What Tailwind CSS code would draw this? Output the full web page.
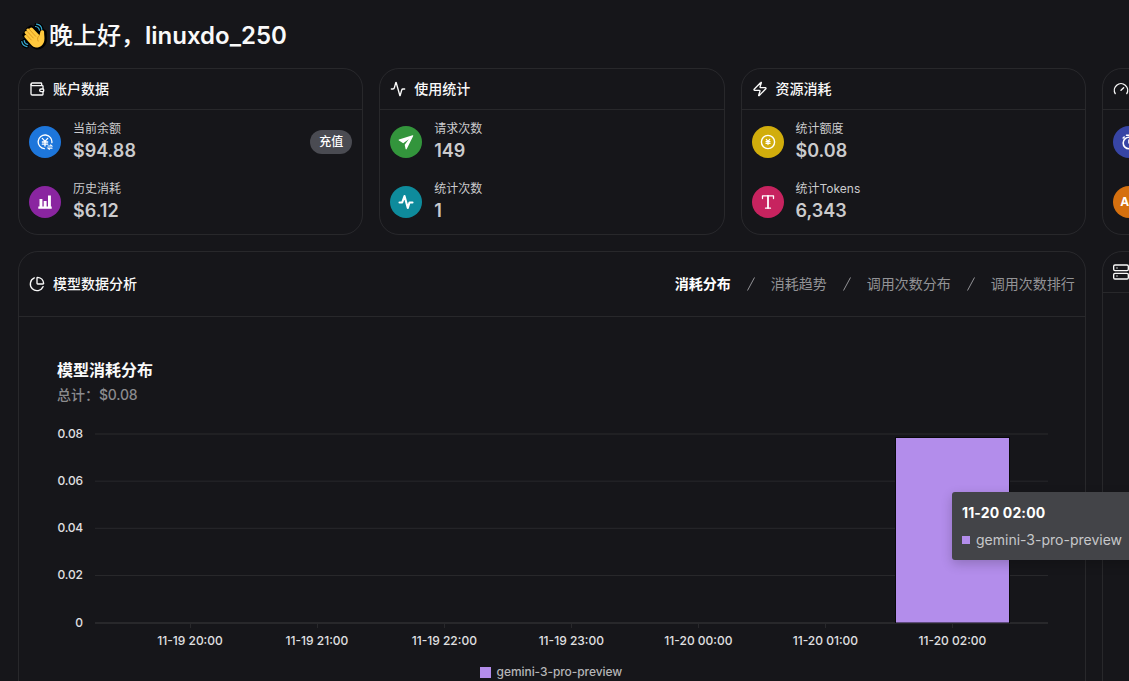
<!DOCTYPE html>
<html lang="zh">
<head>
  <meta charset="UTF-8"/>
  <meta name="viewport" content="width=device-width, initial-scale=1.0"/>
  <title>数据看板</title>
  <script src="https://cdn.jsdelivr.net/npm/@tailwindcss/browser@4"></script>
</head>

<body class="h-screen overflow-hidden bg-[#16161a] font-[Inter,'Noto_Sans_CJK_SC',sans-serif] text-sm text-[#f9f9f9]">

<div class="w-[1447px] pl-[18px] pt-[19px]">

  <!-- saludo -->
  <div class="flex items-center h-[34px] mb-[15px]">
    <svg class="w-[27px] h-[27px] ml-[2px] mr-[2px] shrink-0" viewBox="0 0 27 27" fill="none" stroke-linecap="round" stroke-linejoin="round">
      <g stroke="#000" stroke-width="3.6">
        <path d="M15.5 3.5c2.2.2 3.6 1.700 3.900 3.700M16.500 1.200c3.100.4 5 2.500 5.300 5.200M4.200 17.500c.2 2 1.500 3.500 3.500 3.900M1.800 18.700c.5 2.700 2.400 4.500 5.200 4.900"/>
        <path fill="#000" d="M4 12l4-6 3-2 9 7 2-4 3 2v8c0 5-5 8.500-9 7.500-3-.8-9-8-12-12.500z"/>
      </g>
      <g stroke="#37a9cf" stroke-width="1.200">
        <path d="M15.500 3.500c2.200.2 3.600 1.700 3.900 3.700M16.500 1.200c3.100.4 5 2.500 5.300 5.200M4.200 17.500c.2 2 1.500 3.500 3.500 3.900M1.800 18.700c.5 2.700 2.400 4.500 5.200 4.900"/>
      </g>
      <path fill="#ffc83d" d="M10 5.100c.8-.9 2-.8 2.800.1l6.700 7 .9-3.700c.5-2 3.800-1.800 3.700.6-.1 2.700.8 5.500.2 8.600-.9 4.800-5.200 7.600-9.300 6.600-2.200-.5-3.700-2.200-5.200-4l-5-5.700c-1.400-1.700.4-3.400 1.900-2.200l-1.700-2c-1.200-1.600.8-3.300 2.200-1.900l-.4-.5C5.500 6.400 7.600 4.800 9 6z"/>
      <path stroke="#d9941f" stroke-width=".9" d="M7.100 8.400l6.200 6.600M9.300 6.300l6.400 7M6.500 12l4.800 5M19.500 12.300c-2 1.300-2.500 3.600-1.400 5.800"/>
    </svg>
    <h1 class="text-2xl leading-8 font-semibold whitespace-nowrap"><span class="font-medium">晚上好，</span>linuxdo_250</h1>
  </div>

  <!-- tarjetas -->
  <div class="grid grid-cols-4 gap-4 mb-4">
    <div class="h-[167px] border border-white/8 rounded-[20px]">
      <div class="flex items-center gap-2 h-[41px] px-[10px] border-b border-white/8">
        <svg class="w-4 h-4" viewBox="0 0 24 24" fill="none" stroke="currentColor" stroke-width="2" stroke-linecap="round" stroke-linejoin="round">
          <path d="M19 7V4a1 1 0 0 0-1-1H5a2 2 0 0 0 0 4h15a1 1 0 0 1 1 1v4h-3a2 2 0 0 0 0 4h3a1 1 0 0 0 1-1v-2a1 1 0 0 0-1-1"/>
          <path d="M3 5v14a2 2 0 0 0 2 2h15a1 1 0 0 0 1-1v-4"/>
        </svg>
        <span class="font-medium">账户数据</span>
      </div>
      <div class="flex flex-col gap-4 px-[10px] pt-[10px] text-[#cbcbcd]">
        <div class="flex items-center h-11">
          <div class="w-8 h-8 rounded-full bg-[#1d76db] text-white flex items-center justify-center mr-3">
            <svg class="w-4 h-4" viewBox="0 0 24 24" fill="none" stroke="currentColor" stroke-width="2" stroke-linecap="round">
              <path d="M11 22A10.300 10.300 0 1 1 22.300 13"/>
              <path d="M8 6.500l4 4.500 4-4.500M12 11v7M8 12h8M8 15.200h8"/>
              <path stroke-width="1.700" d="M16.500 18h6l-2-1.800M22.500 21.200h-6l2 1.800"/>
            </svg>
          </div>
          <div>
            <div class="text-xs leading-[18px]">当前余额</div>
            <div class="text-lg leading-[26px] font-semibold">$94.88</div>
          </div>
          <button class="ml-auto h-6 w-[42px] rounded-full bg-[#4a4b52] text-white text-xs font-medium">充值</button>
        </div>
        <div class="flex items-center h-11">
          <div class="w-8 h-8 rounded-full bg-[#8a25a0] text-white flex items-center justify-center mr-3">
            <svg class="w-4 h-4" viewBox="0 0 16 16" fill="currentColor">
              <path d="M1.300 12.500h13.400v2.200H1.300zM2.500 5h2.900v8H2.500zM6.700 7h2.900v6H6.700zM11 1.500h2.900V13H11z"/>
            </svg>
          </div>
          <div>
            <div class="text-xs leading-[18px]">历史消耗</div>
            <div class="text-lg leading-[26px] font-semibold">$6.12</div>
          </div>
        </div>
      </div>
    </div>

    <div class="h-[167px] border border-white/8 rounded-[20px]">
      <div class="flex items-center gap-2 h-[41px] px-[10px] border-b border-white/8">
        <svg class="w-4 h-4" viewBox="0 0 24 24" fill="none" stroke="currentColor" stroke-width="2" stroke-linecap="round" stroke-linejoin="round">
          <path d="M22 12h-2.480a2 2 0 0 0-1.930 1.460l-2.350 8.360a.25.25 0 0 1-.48 0L9.240 2.180a.25.25 0 0 0-.48 0l-2.350 8.360A2 2 0 0 1 4.490 12H2"/>
        </svg>
        <span class="font-medium">使用统计</span>
      </div>
      <div class="flex flex-col gap-4 px-[10px] pt-[10px] text-[#cbcbcd]">
        <div class="flex items-center h-11">
          <div class="w-8 h-8 rounded-full bg-[#33953c] text-white flex items-center justify-center mr-3">
            <svg class="w-4 h-4" viewBox="0 0 16 16" fill="currentColor">
              <path d="M14.600 1.200L1 5.600c-.5.200-.5.700-.1.900l4.300 2.700 5.600-4-4.100 5.500.9 4.300c.1.600.8.700 1.100.1l6.500-13c.2-.5-.1-1-.6-.9z"/>
            </svg>
          </div>
          <div>
            <div class="text-xs leading-[18px]">请求次数</div>
            <div class="text-lg leading-[26px] font-semibold">149</div>
          </div>
        </div>
        <div class="flex items-center h-11">
          <div class="w-8 h-8 rounded-full bg-[#0e8b9c] text-white flex items-center justify-center mr-3">
            <svg class="w-4 h-4" viewBox="0 0 16 16" fill="none" stroke="currentColor" stroke-width="2.100" stroke-linecap="round" stroke-linejoin="round">
              <path d="M1.500 8.500h2.700L6.500 2l3.300 12 1.700-5.500h3"/>
            </svg>
          </div>
          <div>
            <div class="text-xs leading-[18px]">统计次数</div>
            <div class="text-lg leading-[26px] font-semibold">1</div>
          </div>
        </div>
      </div>
    </div>

    <div class="h-[167px] border border-white/8 rounded-[20px]">
      <div class="flex items-center gap-2 h-[41px] px-[10px] border-b border-white/8">
        <svg class="w-4 h-4" viewBox="0 0 24 24" fill="none" stroke="currentColor" stroke-width="2" stroke-linecap="round" stroke-linejoin="round">
          <path d="M4 14a1 1 0 0 1-.78-1.630l9.900-10.200a.5.5 0 0 1 .86.460l-1.920 6.020A1 1 0 0 0 13 10h7a1 1 0 0 1 .78 1.630l-9.900 10.200a.5.5 0 0 1-.86-.46l1.920-6.020A1 1 0 0 0 11 14z"/>
        </svg>
        <span class="font-medium">资源消耗</span>
      </div>
      <div class="flex flex-col gap-4 px-[10px] pt-[10px] text-[#cbcbcd]">
        <div class="flex items-center h-11">
          <div class="w-8 h-8 rounded-full bg-[#d1ad0c] text-white flex items-center justify-center mr-3">
            <svg class="w-4 h-4" viewBox="0 0 16 16" fill="none" stroke="currentColor" stroke-width="1.400" stroke-linecap="round">
              <circle cx="8" cy="8" r="6.600"/>
              <path stroke-width="1.200" d="M6.300 5.400L8 7.400l1.700-2M8 7.400v3.200M6 7.700h4M6 9.400h4"/>
            </svg>
          </div>
          <div>
            <div class="text-xs leading-[18px]">统计额度</div>
            <div class="text-lg leading-[26px] font-semibold">$0.08</div>
          </div>
        </div>
        <div class="flex items-center h-11">
          <div class="w-8 h-8 rounded-full bg-[#c7235f] text-white flex items-center justify-center mr-3">
            <svg class="w-4 h-4" viewBox="0 0 16 16" fill="none" stroke="currentColor" stroke-width="1.300" stroke-linecap="round" stroke-linejoin="round">
              <path d="M2.500 4.500V1.800h11v2.700M5.500 14.200h5"/>
              <path stroke-width="1.800" d="M8 2v12"/>
            </svg>
          </div>
          <div>
            <div class="text-xs leading-[18px]">统计Tokens</div>
            <div class="text-lg leading-[26px] font-semibold">6,343</div>
          </div>
        </div>
      </div>
    </div>

    <div class="h-[167px] border border-white/8 rounded-[20px]">
      <div class="flex items-center h-[41px] px-[10px] border-b border-white/8">
        <svg class="w-4 h-4" viewBox="0 0 24 24" fill="none" stroke="currentColor" stroke-width="2" stroke-linecap="round" stroke-linejoin="round">
          <path d="m12 14 4-4"/>
          <path d="M3.340 19a10 10 0 1 1 17.320 0"/>
        </svg>
      </div>
      <div class="flex flex-col gap-4 px-[10px] pt-[10px]">
        <div class="flex items-center h-11">
          <div class="w-8 h-8 rounded-full bg-[#3745a5] text-white flex items-center justify-center">
            <svg class="w-4 h-4" viewBox="0 0 16 16" fill="none" stroke="currentColor" stroke-width="1.600" stroke-linecap="round">
              <circle cx="8" cy="9" r="5.800"/>
              <path d="M5.500 1.200h5M8 6v3M2.200 4l1-1"/>
            </svg>
          </div>
        </div>
        <div class="flex items-center h-11">
          <div class="w-8 h-8 rounded-full bg-[#d5700f] text-white flex items-center justify-center text-xs font-bold">AZ</div>
        </div>
      </div>
    </div>
  </div>

  <!-- analisis de modelos -->
  <div class="grid grid-cols-4 gap-4">
    <div class="col-span-3 h-[520px] border border-white/8 rounded-[20px]">
      <div class="flex items-center h-[65px] px-[10px] border-b border-white/8">
        <svg class="w-4 h-4 mr-2" viewBox="0 0 24 24" fill="none" stroke="currentColor" stroke-width="2" stroke-linecap="round" stroke-linejoin="round">
          <path d="M21 12c.552 0 1.005-.449.950-.998a10 10 0 0 0-8.953-8.951c-.55-.055-.998.398-.998.950v8a1 1 0 0 0 1 1z"/>
          <path d="M21.210 15.890A10 10 0 1 1 8 2.830"/>
        </svg>
        <span class="font-medium">模型数据分析</span>
        <div class="ml-auto flex items-center text-[#939396]">
          <span class="font-semibold text-white">消耗分布</span>
          <svg class="w-2 h-[14px] mx-4" viewBox="0 0 8 14" stroke="currentColor" fill="none"><path d="M.5 13.500l7-13"/></svg>
          <span>消耗趋势</span>
          <svg class="w-2 h-[14px] mx-4" viewBox="0 0 8 14" stroke="currentColor" fill="none"><path d="M.5 13.500l7-13"/></svg>
          <span>调用次数分布</span>
          <svg class="w-2 h-[14px] mx-4" viewBox="0 0 8 14" stroke="currentColor" fill="none"><path d="M.5 13.500l7-13"/></svg>
          <span>调用次数排行</span>
        </div>
      </div>

      <div class="relative pt-[41px]">
        <div class="px-[38px] mb-[13px]">
          <h2 class="text-base leading-[25px] font-semibold">模型消耗分布</h2>
          <p class="leading-6 text-[#8b8b8e] font-medium">总计：<span class="tracking-[-0.2px]">$0.08</span></p>
        </div>
        <svg class="block w-[1066px] h-[240px]" viewBox="0 0 1066 240">
          <g stroke="#fff" stroke-opacity=".08">
            <path stroke-width="2" stroke-opacity=".045" d="M76 14H1029"/>
            <path d="M76 61.200H1029M76 108.300H1029M76 155.500H1029"/>
            <path stroke-width="2" d="M76 203H1029"/>
            <path d="M171.500 204v4M298.500 204v4M425.500 204v4M552.500 204v4M679.500 204v4M806.500 204v4M933.500 204v4"/>
          </g>
          <rect x="876" y="17" width="115" height="186" fill="#08080a"/>
          <rect x="877" y="18" width="113" height="184.500" fill="#b38deb"/>
          <g fill="#e0e0e2" font-size="12" font-weight="500" text-anchor="end">
            <text x="64" y="18" textLength="25.500">0.08</text>
            <text x="64" y="65" textLength="25.500">0.06</text>
            <text x="64" y="112" textLength="25.500">0.04</text>
            <text x="64" y="159" textLength="25.500">0.02</text>
            <text x="64" y="207">0</text>
          </g>
          <g fill="#e0e0e2" font-size="12" font-weight="500" text-anchor="middle">
            <text x="171" y="225">11-19 20:00</text>
            <text x="298" y="225">11-19 21:00</text>
            <text x="425.300" y="225">11-19 22:00</text>
            <text x="552.300" y="225">11-19 23:00</text>
            <text x="679.400" y="225">11-20 00:00</text>
            <text x="806.400" y="225">11-20 01:00</text>
            <text x="933.400" y="225">11-20 02:00</text>
          </g>
        </svg>
        <div class="flex items-center justify-center gap-[6px] mt-1 mr-[2px] text-xs leading-4 font-medium text-[#b5b5b7]">
          <span class="w-[11px] h-[11px] bg-[#b38deb]"></span>
          <span class="tracking-[-0.07px]">gemini-3-pro-preview</span>
        </div>

        <!-- tooltip de la barra -->
        <div class="absolute left-[933px] top-[175px] w-[240px] h-[68px] rounded-[3px] bg-[#434448] px-[10px] pt-[10px] shadow-[0_4px_12px_rgba(0,0,0,0.2)]">
          <div class="leading-[22px] font-bold tracking-[0.15px] text-white">11-20 02:00</div>
          <div class="flex items-center mt-[5px] leading-[22px] text-[#c7c8ca] whitespace-nowrap">
            <span class="w-2 h-2 mr-[6px] bg-[#b38deb]"></span>gemini-3-pro-preview
          </div>
        </div>
      </div>
    </div>

    <div class="h-[520px] border border-white/8 rounded-[20px]">
      <div class="flex items-center h-[41px] px-[10px] border-b border-white/8">
        <svg class="w-4 h-4" viewBox="0 0 24 24" fill="none" stroke="currentColor" stroke-width="2" stroke-linecap="round" stroke-linejoin="round">
          <rect width="22" height="8.500" x="1" y="1.500" rx="2"/>
          <rect width="22" height="8.500" x="1" y="14" rx="2"/>
          <path d="M6 6h.01M6 18h.01"/>
        </svg>
      </div>
    </div>
  </div>
</div>

</body>
</html>
